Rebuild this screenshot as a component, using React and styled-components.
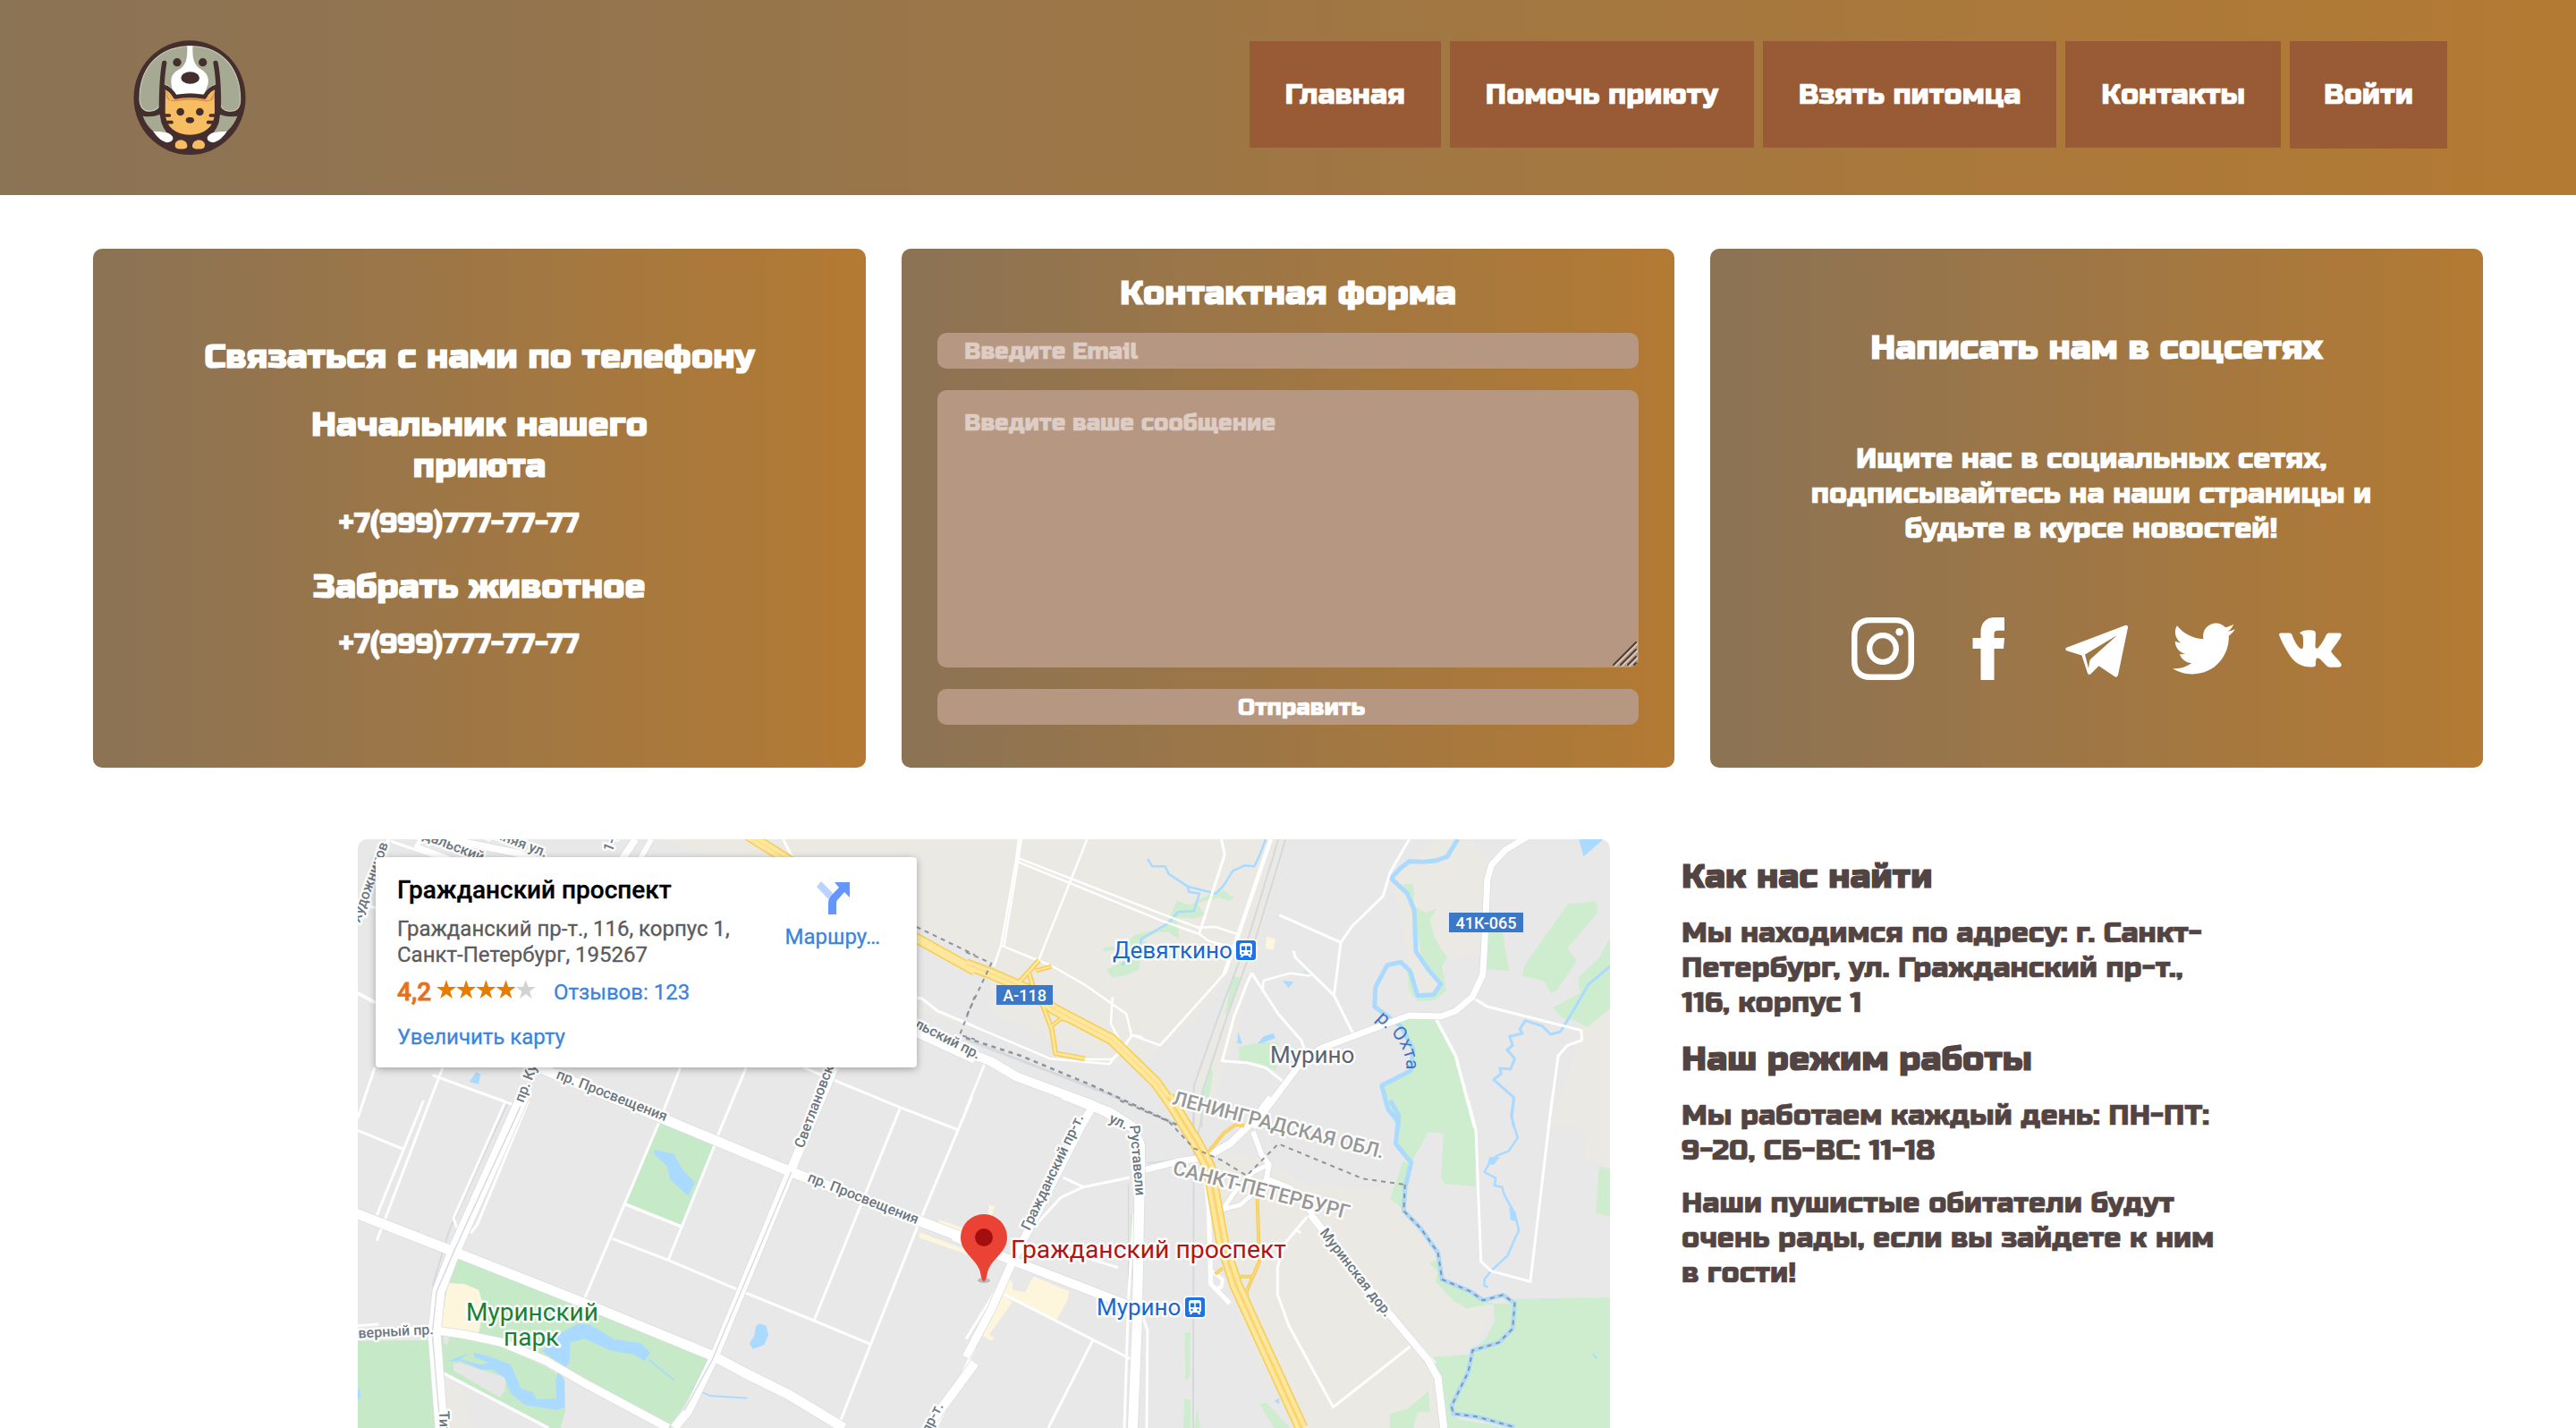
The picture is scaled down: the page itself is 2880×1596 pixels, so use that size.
import React from 'react';
import styled, { createGlobalStyle } from 'styled-components';
import { FaTwitter } from 'react-icons/fa';

const GlobalStyle = createGlobalStyle`
  *, *::before, *::after { box-sizing: border-box; }
  body {
    margin: 0;
    background: #fff;
    font-family: 'Russo One', Inter, 'Open Sans', sans-serif;
    font-weight: 400;
    -webkit-text-stroke: 0.6px currentColor;
    overflow: hidden;
  }
  h3, p { margin: 0; }
`;

const gradient = 'linear-gradient(to right, #8b7355, #b37a33)';

const Page = styled.div`
  display: flex;
  flex-direction: column;
  height: 1596px;
  overflow: hidden;
`;

/* ---------- header ---------- */

const Header = styled.header`
  display: flex;
  justify-content: space-between;
  align-items: flex-start;
  flex: none;
  height: 218px;
  padding: 0 144px 0 146px;
  background: ${gradient};
`;

const Logo = styled.svg`
  width: 133.4px;
  height: 133.4px;
  margin-top: 43px;
`;

const Nav = styled.nav`
  display: flex;
  align-items: flex-start;
  gap: 10px;
  margin-top: 46px;
`;

const NavItem = styled.a`
  display: block;
  padding: 0 ${(p) => p.$pad || 40}px;
  height: ${(p) => p.$height || 119}px;
  line-height: ${(p) => p.$height || 119}px;
  font-size: 32px;
  white-space: nowrap;
  color: #fff;
  background: #985b36;
`;

/* ---------- cards ---------- */

const Cards = styled.section`
  display: flex;
  flex: none;
  gap: 40px;
  margin-top: 60px;
  padding: 0 104px;
`;

const Card = styled.article`
  display: flex;
  flex-direction: column;
  align-items: center;
  width: 864px;
  height: 580px;
  padding: ${(p) => p.$top}px 40px 0;
  border-radius: 10px;
  background: ${gradient};
  color: #fff;
`;

const Heading = styled.h3`
  font-size: 38.4px;
  font-weight: 700;
  line-height: 46px;
  letter-spacing: 0.15px;
  -webkit-text-stroke: 0;
  text-align: ${(p) => p.$align || 'center'};
  white-space: nowrap;
  margin-bottom: ${(p) => p.$after || 0}px;
`;

const Phone = styled.p`
  font-size: 32px;
  line-height: 39px;
  padding-right: 46px;
  margin-bottom: ${(p) => p.$after || 0}px;
`;

const Form = styled.form`
  display: flex;
  flex-direction: column;
  align-self: stretch;
  gap: 24px;
`;

const field = `
  display: block;
  width: 100%;
  border: 0;
  border-radius: 10px;
  outline: 0;
  background: #b69782;
  color: #fff;
  font-family: inherit;
  font-size: 26px;
  &::placeholder { color: #decdc4; opacity: 1; }
`;

const EmailInput = styled.input`
  ${field}
  height: 40px;
  padding: 0 30px;
`;

const MessageBox = styled.div`
  position: relative;
  height: 310px;
`;

const Message = styled.textarea`
  ${field}
  height: 310px;
  padding: 21px 30px 20px;
  line-height: 32px;
  resize: none;
`;

const Grip = styled.svg`
  position: absolute;
  right: 1px;
  bottom: 1px;
  width: 28px;
  height: 28px;
`;

const Submit = styled.button`
  ${field}
  height: 40px;
  padding: 0 0 0 30px;
  text-align: center;
`;

const CardText = styled.p`
  font-size: 32px;
  line-height: 39px;
  text-align: center;
  padding-right: 12px;
  margin-bottom: 80.5px;
`;

const Socials = styled.div`
  display: flex;
  gap: 49.6px;
  svg { display: block; width: 70px; height: 70px; fill: #fff; }
`;

/* ---------- location ---------- */

const Location = styled.section`
  display: flex;
  flex: none;
  gap: 80px;
  margin-top: 80px;
  padding-left: 400px;
`;

const MapFrame = styled.div`
  position: relative;
  width: 1400px;
  height: 658px;
  border-radius: 10px 10px 0 0;
  overflow: hidden;
  background: #e8e8e8;
  -webkit-text-stroke: 0;
`;

const MapSvg = styled.svg`
  display: block;
  font-family: Roboto, sans-serif;
  font-weight: 400;
`;

const PlaceCard = styled.aside`
  position: absolute;
  left: 20px;
  top: 20px;
  display: flex;
  justify-content: space-between;
  width: 605px;
  height: 235px;
  padding: 18px 41px 0 24px;
  border-radius: 4px;
  background: #fff;
  box-shadow: 0 2px 8px rgba(0, 0, 0, 0.3);
  font-family: Roboto, sans-serif;
  font-weight: 400;
  font-size: 24px;
  color: #5b5b5b;
  -webkit-text-stroke: 0.3px currentColor;
`;

const PlaceInfo = styled.div`
  display: flex;
  flex-direction: column;
`;

const PlaceName = styled.div`
  font-size: 28px;
  font-weight: 500;
  line-height: 37px;
  color: #000;
`;

const PlaceAddress = styled.div`
  margin-top: 11px;
  line-height: 29px;
`;

const Rating = styled.div`
  display: flex;
  align-items: center;
  height: 36px;
  margin-top: 8px;
`;

const Score = styled.span`
  width: 44px;
  font-size: 28px;
  font-weight: 500;
  color: #e7711b;
  -webkit-text-stroke: 0.8px currentColor;
`;

const Stars = styled.svg`
  width: 112px;
  height: 24px;
  margin-bottom: 4px;
`;

const MapLink = styled.a`
  color: #3a84df;
  line-height: 30px;
  margin: ${(p) => p.$margin || 0};
`;

const Route = styled.div`
  display: flex;
  flex-direction: column;
  align-items: center;
  padding-top: 8px;
  svg { width: 40px; height: 40px; }
`;

const Details = styled.div`
  display: flex;
  flex-direction: column;
  gap: 20.3px;
  padding-top: 19px;
  color: #524442;
`;

const Paragraph = styled.p`
  font-size: 32px;
  line-height: 39px;
  white-space: nowrap;
`;

/* ---------- drawings ---------- */

const PetLogo = () => (
  <Logo viewBox="140 130 400 400">
    <ellipse cx="338" cy="328.500" rx="187.500" ry="191.500" fill="#452e2e" />
    <path d="M330 156C222 162 169 240 170 335C172 365 185 374 205 374C225 372 236 362 238 350L258 285Q280 292 290 320L390 320Q400 292 422 285L442 350C444 365 455 374 475 374C500 374 508 360 508 335C508 240 455 160 350 156Z" fill="#a7aa92" stroke="#cfd3c0" strokeWidth="3" />
    <path d="M330 155H348C347 200 352 222 383 238C400 252 403 268 399 285Q393 300 387 318Q340 308 291 320Q276 300 276 275C276 255 284 245 299 236C326 222 331 200 330 155Z" fill="#fff" />
    <ellipse cx="340" cy="262" rx="31" ry="20" fill="#452e2e" />
    <circle cx="296" cy="210" r="14" fill="#452e2e" />
    <circle cx="382" cy="210" r="14" fill="#452e2e" />
    <path d="M253 212Q243 270 243 372M425 212Q437 270 435 372" fill="none" stroke="#452e2e" strokeWidth="16" strokeLinecap="round" />
    <path d="M250 291Q274 298 290 326Q338 317 388 326Q402 299 428 291L429 375C429 433 388 460 338 460C290 460 249 433 249 375Z" fill="#f7bd62" stroke="#452e2e" strokeWidth="14" strokeLinejoin="round" />
    <path d="M255 302Q270 320 284 336Q338 324 394 336L424 304L416 335Q400 344 388 341Q338 332 290 341Q272 342 262 332Z" fill="#e2904c" />
    <path d="M255 306L272 336L284 337M423 306L406 336L394 337" fill="#f7bd62" />
    <circle cx="307" cy="376" r="13" fill="#452e2e" />
    <circle cx="372" cy="376" r="13" fill="#452e2e" />
    <ellipse cx="339" cy="404" rx="14" ry="10" fill="#452e2e" />
    <path d="M254 388H270M256 411H278M424 388H408M422 411H400" stroke="#452e2e" strokeWidth="11" strokeLinecap="round" />
    <path d="M181 390Q212 395 238 385L243 412Q250 432 260 443L215 440Q190 418 181 390Z" fill="#a7aa92" />
    <path d="M215 440L256 443Q284 452 282 466Q278 480 258 478Q235 470 215 440Z" fill="#fff" />
    <path d="M498 390Q466 395 440 385L436 412Q429 432 419 443L464 440Q488 418 498 390Z" fill="#a7aa92" />
    <path d="M464 440L423 443Q395 452 397 466Q401 480 421 478Q444 470 464 440Z" fill="#fff" />
    <path d="M289 487C289 465 329 463 330 490Q330 500 318 500H302Q289 500 289 487Z" fill="#f7bd62" />
    <path d="M389 487C389 465 348 463 347 490Q347 500 359 500H376Q389 500 389 487Z" fill="#f7bd62" />
  </Logo>
);

const Instagram = () => (
  <svg viewBox="0 0 70 70">
    <path fillRule="evenodd" d="M20.500 0H49.500C62 0 70 8 70 20.500V49.500C70 62 62 70 49.500 70H20.500C8 70 0 62 0 49.500V20.500C0 8 8 0 20.500 0ZM21 6.300C11.500 6.300 6.500 11.500 6.500 21V49C6.500 58.500 11.500 63.500 21 63.500H49C58.500 63.500 63.500 58.500 63.500 49V21C63.500 11.500 58.500 6.300 49 6.300ZM35 17A18 18 0 1 1 35 53A18 18 0 1 1 35 17ZM35 23.300A11.700 11.700 0 1 0 35 46.700A11.700 11.700 0 1 0 35 23.300Z" />
    <circle cx="53.700" cy="16.300" r="4.300" />
  </svg>
);

const Facebook = () => (
  <svg viewBox="0 0 70 70">
    <path d="M25.500 70V35H16.500V23H25.500V17C25.500 6 31 0 42 0H52V14.700H45.500C41.500 14.700 40.500 16 40.500 19V23H52L51 35H40.500V70Z" />
  </svg>
);

const Telegram = () => (
  <svg viewBox="0 0 70 70">
    <path fillRule="evenodd" d="M1.500 33.800L67.500 8.800Q70.300 8.300 70 11.500L59 64.500Q58 67.800 55 66L37.500 54.300L29 62.800Q26 65.500 24.800 62L18.500 42.500L1.500 37.300Q-1 35.500 1.500 33.800ZM22 41.500L26 57L27 50Q27 48 29 46L58 20Z" />
  </svg>
);

const Vk = () => (
  <svg viewBox="0 0 70 70">
    <path d="M2 17.400H12Q13.700 17.400 14.300 19C17 26 21 34.500 25 35.200C27.200 35.300 27 32 27 25C27 20 26 19.500 23 17.600C25 15 29 14.300 33 14.300C39 14.300 41 15 41 19L40.500 32C40.500 34 41.500 35 43 34.500C46 32 50 26 52.500 20Q53.500 17.400 55.500 17.400H67.500Q70.500 17.400 69.500 20.500C68 25.500 58.500 36.500 58.300 38C58 40 69.700 50 69.800 53Q69.500 55.700 66.500 55.700H57Q54.500 55.700 52.500 53.500C49.500 50.500 45.500 45 43 45.500C41 46 41 49 41 52.500Q41 55.300 37.500 55.500C26 56 17.500 51.500 11 41C6 33 2 25 0.200 20Q-0.500 17.400 2 17.400Z" />
  </svg>
);

const starPath = 'M11 0L13.700 8H22L15.300 13L17.800 21L11 16L4.200 21L6.700 13L0 8H8.300Z';

/* Road network. Each tile carries the transform of its own local grid. */

const tiles = {
  nw: 'translate(390 920) scale(.4464 .33333)',
  sw: 'translate(390 1230) scale(.4464 .33333)',
  ne: 'translate(1080 920) scale(.4719 .33333)',
  se: 'translate(1080 1230) scale(.4719 .33333)',
};

const RURAL = '#ebe9e4';
const GREEN = '#ceedce';
const PARK = '#c6e9c7';
const WATER = '#aadaff';
const SAND = '#fdf6dd';

const areas = {
  ne: [
    [RURAL, '1110,54 1180,54 1250,130 1235,200 1228,440 1200,440 1140,460 1100,580 1070,578 1055,500 1020,250 1010,185 1060,130'],
    [RURAL, '1526,640 1440,690 1458,720 1380,1020 1526,1020'],
    [GREEN, '1035,205 1060,205 1062,280 1090,300 1116,285 1098,325 1110,380 1125,420 1140,450 1128,480 1138,560 1110,595 1070,597 1050,560 1045,500 1060,500 1070,575 1108,573 1124,540 1080,450 1064,330'],
    [GREEN, '1235,290 1265,310 1275,400 1287,495 1232,490'],
    [GREEN, '1425,272 1493,262 1496,300 1425,420 1447,462 1400,560 1385,570 1370,530 1318,512 1322,480'],
    [GREEN, '1526,385 1526,620 1472,685 1440,660 1415,655 1390,618 1455,570 1450,520 1500,450'],
    [GREEN, '1035,655 1113,655 1160,780 1205,1020 1020,1020 1000,960 982,880 1055,830 1065,760 1030,685'],
    [GREEN, '580,235 610,225 635,250 625,262 600,250 575,258 548,268 565,308 540,320 500,315 505,390 480,365 455,365 420,390 440,410 415,440 410,490 380,510 345,518 333,490 365,470 380,425 325,428 325,418 370,410 400,375 470,350 500,260 530,275'],
    [GREEN, '632,512 652,520 625,620 613,640'],
    [GREEN, '580,812 585,840 575,925 560,920 570,850'],
    [GREEN, '645,750 700,735 740,735 735,830 700,808 648,795'],
    [GREEN, '795,505 805,495 815,508'],
    [WATER, '1452,54 1510,54 1463,112'],
    [WATER, '645,702 655,740 642,738'],
    [WATER, '690,740 705,715 728,704 733,720 700,738'],
    [WATER, '750,528 776,532 764,552'],
    [SAND, '712,380 733,388 728,425 710,420'],
  ],
  se: [
    [RURAL, '600,170 720,200 800,280 1000,300 1040,380 1118,530 1130,600 1250,690 1200,830 1110,860 1130,1098 800,1098 690,860 640,700 600,400'],
    [RURAL, '1480,0 1526,0 1526,225 1460,190'],
    [GREEN, '995,0 1190,0 1208,100 1207,288 1135,280 1125,258 1132,110 1095,105 1070,170 1055,208 1020,150 1025,50'],
    [GREEN, '1035,205 1055,210 1040,370 1005,330'],
    [GREEN, '1300,665 1526,660 1526,1098 1300,1098 1150,1050 1155,1020 1192,910 1200,835 1268,812 1295,770'],
    [GREEN, '1098,545 1120,530 1128,600 1225,670 1252,682 1185,697 1155,672 1112,605 1118,575'],
    [GREEN, '1250,680 1300,680 1295,765 1262,812 1200,838 1230,800 1252,740'],
    [GREEN, '1105,860 1190,852 1190,910 1150,1040 1170,1070 1290,1098 1132,1098 1118,925'],
    [GREEN, '1500,222 1526,228 1526,390 1492,376'],
    [GREEN, '1095,975 1100,1045 1070,1045 1060,1098 1005,1098 1005,1050 1045,1035'],
    [GREEN, '695,1018 710,1012 768,1098 730,1098'],
    [GREEN, '518,778 532,778 530,925 520,940'],
    [GREEN, '517,998 532,1005 533,1098 515,1098'],
    [GREEN, '548,1030 555,1098 540,1098'],
    [GREEN, '390,380 402,375 402,610 390,600'],
    [WATER, '1483,845 1495,860 1491,868'],
    [WATER, '730,1008 742,998 742,1018'],
    [WATER, '1240,190 1265,190 1250,215 1236,212'],
    [WATER, '1287,360 1303,375 1303,405 1290,400'],
    [SAND, '95,600 110,605 110,635 140,643 160,590 245,640 240,670 215,735 85,655'],
    [SAND, '85,655 110,675 55,785 68,797 60,805 35,785'],
    [SAND, '55,350 68,355 60,390 52,385'],
  ],
  sw: [
    [PARK, '778,70 917,147 833,423 693,348'],
    [PARK, '275,525 590,690 905,862 850,1000 805,1098 600,955 490,870 380,810 228,775 245,612'],
    [PARK, '228,785 380,825 490,890 540,930 542,1040 530,1098 500,1098 238,915'],
    [PARK, '22,806 215,803 225,900 228,1098 22,1098'],
    ['#ebe9e4', '238,920 280,960 310,1098 232,1098'],
    [SAND, '248,612 290,615 325,635 338,690 325,782 230,760'],
    ['#e6e6e6', '262,882 280,880 395,930 390,975 378,995 262,905'],
    ['#e6e6e6', '237,787 252,792 248,820 238,815'],
    [WATER, '765,165 815,180 835,230 867,275 850,320 805,265 797,220 765,180'],
    [WATER, '485,840 530,780 575,748 605,752 640,780 665,800 730,813 755,845 740,874 715,852 655,838 590,798 555,812 552,880 542,895 500,855'],
    [WATER, '525,905 540,940 541,1030 520,1037 440,1020 405,980 390,930 360,902 330,902 280,872 245,876 298,848 280,868 330,886 352,880 315,860 312,845 345,855 405,885 420,930 430,965 460,978 470,1002 520,1000 518,940'],
    [WATER, '1030,748 1045,755 1051,785 1040,820 1012,833 1003,815 1015,790 1020,755'],
    [WATER, '22,965 28,970 29,1000 22,1000'],
    [SAND, '1478,400 1568,440 1568,465 1475,412'],
    [SAND, '1430,442 1568,512 1568,525 1428,460'],
  ],
  nw: [[WATER, '318,835 330,840 325,875 302,868']],
};

/* width, then the points of each line */
const water = {
  ne: [
    [5, '1165,54 1140,112 1115,125 1085,130 1050,128 1030,150 1007,185 1045,235 1062,290 1066,430 1095,490 1125,540 1108,575 1070,578 1052,495 1030,466 998,476 970,550 968,615 1030,680 1060,760 1053,830 985,880 1000,960 1025,1000 1022,1030'],
    [2.5, '430,120 442,145 472,145 480,170 525,212 592,236 610,210 632,160 660,142 683,145 695,110 710,54'],
    [2.5, '525,212 528,230 553,236 540,295 502,298 480,335 415,388 412,420 370,475'],
    [3, '1526,480 1475,540 1430,650 1408,700 1385,708 1365,680 1325,662 1312,690 1318,705 1288,715 1295,745 1282,760 1300,790 1290,825 1265,822 1268,840 1250,860 1298,920 1292,980 1298,1020'],
  ],
  se: [
    [5, '1005,0 1025,50 1018,145 1055,208 1040,290 1037,370 1078,430 1118,510 1128,600 1195,640 1225,670 1272,652 1300,680 1295,765 1262,812 1200,838 1190,910 1150,1025 1155,1050 1210,1060 1300,1095'],
    [2.5, '1298,0 1293,60 1307,125 1285,170 1258,185 1240,210 1228,240 1255,260 1252,285 1270,290 1275,315 1300,380 1310,435 1300,465 1283,520 1245,570 1228,600 1228,620 1237,626'],
  ],
  sw: [
    [1.8, '750,868 815,938'],
    [1.8, '857,962 905,990 998,998'],
  ],
};

const rails = {
  ne: [
    [2, '740,54 670,380 600,640 540,880 538,1020'],
    [2, '757,54 690,370 620,640 560,900 558,1020'],
    [3, '0,725 120,790 350,915 500,1012'],
  ],
  se: [
    [2, '540,0 538,1098'],
    [1.5, '565,0 540,190 430,210'],
    [1.5, '385,280 385,600'],
  ],
  sw: [
    [2, '400,0 250,440 210,620 212,680'],
  ],
};

const minor = {
  nw: [
    [3, '100,58 230,118'], [3, '1088,54 1112,118'], [5, '180,54 170,78 250,118'],
    [4, '22,570 67,602'], [3, '65,820 22,990'], [3, '235,820 70,1400'],
    [3, '210,845 420,948'], [3, '830,820 778,1000'], [3, '995,820 920,1060'],
    [3, '1140,820 1390,958 1525,1028'], [3, '1422,585 1435,588 1475,630 1568,682'],
    [3, '22,262 67,285'],
  ],
  sw: [
    [3, '450,0 322,415 305,445'], [3, '390,10 262,395 272,430'],
    [3, '22,100 135,162'], [3, '187,0 70,385'],
    [3, '778,70 590,665'], [3, '917,147 800,535'], [3, '660,463 800,535 970,632 1165,738 1307,817'],
    [3.500, '693,348 833,423'], [3, '1380,28 1165,738'],
    [3, '1560,-10 1425,420 1307,817 1230,1078'], [3, '1568,830 1470,1098'],
    [3.500, '238,915 500,1098'], [3, '22,755 75,750'],
  ],
  ne: [
    [2.500, '125,54 118,130 83,410'], [2.500, '131,54 123,130 90,412'],
    [2.500, '120,115 465,305 550,350 592,348 645,373'],
    [2.500, '120,128 460,325 553,372 575,395 640,420'],
    [2.500, '287,54 172,460'], [3, '605,54 613,105 553,368'],
    [2.500, '66,480 83,410 205,480 285,545 380,640 392,710 460,745 612,505 645,373'],
    [2.500, '347,583 343,672 368,740'], [2.500, '418,718 392,710 370,765 345,792 280,792'],
    [2.500, '0,670 200,790 340,808 392,715'],
    [4.500, '722,54 645,375 612,505'],
    [3, '677,503 665,540 635,650 607,797 665,803 710,820 750,865'],
    [3, '677,503 740,640 795,730 803,765'],
    [3, '742,308 888,400'], [3, '1050,54 1005,165 988,245 915,345 888,400 872,578 918,708'],
    [3, '776,428 780,450 872,578'], [2.500, '703,560 705,528 768,503 818,512'],
    [3, '1200,585 1235,615 1458,695 1459,728 1425,745 1403,780 1380,1020'],
    [3.500, '1113,655 1160,780 1205,1020'], [2.500, '45,805 0,960'],
  ],
  se: [
    [3, '1190,0 1208,100 1220,540 1245,572 1337,607 1388,0'],
    [2.500, '1025,740 1112,880'],
    [3, '808,390 755,480 738,560 738,650 765,755 870,1028 1052,825'], [2.500, '780,430 793,445'],
    [5, '565,215 575,360 580,615 625,680'], [4, '580,570 608,600 605,625 590,632'],
    [3, '412,700 430,770 428,1098'], [3, '398,380 385,660 375,1098'],
    [3, '230,258 278,290 388,258'], [3, '278,290 225,325 150,440'],
    [3, '90,650 395,870'], [3, '300,805 195,1098'], [3, '200,490 360,560'],
    [3, '110,560 70,640 0,800'],
  ],
};

const major = {
  nw: [
    [8, '718,54 680,130'], [6, '758,54 725,130'], [5, '100,54 22,310'],
    [8, '250,54 420,100 560,170'],
    [10, '1422,702 1568,792'],
  ],
  sw: [
    [11, '10,374 260,505 600,685 915,858 990,912 1100,985 1240,1098'],
    [14, '445,-40 265,500 225,640 214,780 232,1098'],
    [11, '440,-130 800,68 1100,235 1568,475'],
    [10, '1215,-110 1110,225 915,860 850,1040 815,1098'],
    [10, '1568,880 1480,1040 1448,1098'],
    [9, '10,782 215,770 290,785 380,810 490,870 600,955 800,1098'],
  ],
  ne: [
    [7, '1330,45 1278,90 1245,140 1235,190 1228,420 1224,510 1200,582 1160,630 1125,648 1050,645 840,755 790,810 700,980 680,1020'],
    [10, '-20,755 60,800 120,850 300,945 370,1000'],
  ],
  se: [
    [8, '722,-10 680,70 625,145 575,185'],
    [6, '680,105 700,180 718,215 712,262 770,295 820,380'],
    [5, '712,218 680,240 640,300 608,365 650,350 690,300 712,262'],
    [8, '815,380 1000,710 1095,870 1118,930 1132,1098'],
    [11, '230,-20 340,40 395,90 412,150 412,240 405,760 395,1098'],
    [7, '425,232 500,205 560,192'],
    [9, '300,20 275,80 110,540 60,700 0,860'],
    [10, '-30,455 80,520 410,700'],
  ],
};

const highway = {
  nw: [[13, '1000,40 1120,140'], [12, '1400,370 1568,495']],
  ne: [
    [6, '55,495 125,535 160,480 173,460'], [6, '150,505 158,545 182,610 203,690 212,772 282,790'],
    [5, '165,495 203,480'], [5, '203,680 225,655 260,668'],
    [13, '0,473 60,505 150,560 210,625 345,725 450,870 525,1020'],
  ],
  se: [
    [4, '575,172 610,110 640,80 660,85'], [4, '690,330 695,540 665,640 668,700'],
    [4, '615,540 640,590 680,590 693,545'], [4, '590,582 608,562'],
    [15, '478,-12 545,140 575,220 608,480 640,620 695,790 795,1098'],
  ],
};

const boundary = {
  nw: [[2, '1422,348 1568,442'], [2, '1568,580 1530,710 1568,725']],
  ne: [[2, '0,432 60,470 20,590 0,650'], [2.500, '0,720 130,780 300,880 505,1015']],
  se: [
    [2, '365,0 480,70 540,160 605,200 665,252 740,145 940,262 1040,282'],
    [2, '1040,282 1037,370 1078,430 1118,510 1128,600 1195,640 1225,670 1272,652 1300,680 1295,765 1262,812 1200,838 1190,910 1150,1025 1155,1050 1210,1060 1300,1095'],
  ],
};

const Lines = ({ set, stroke, extra = 0, dash }) =>
  Object.entries(set).map(([tile, lines]) => (
    <g key={tile} transform={tiles[tile]} fill="none" stroke={stroke} strokeLinejoin="round">
      {lines.map(([width, points], i) => (
        <polyline key={i} points={points} strokeWidth={width + extra} strokeDasharray={dash} vectorEffect="non-scaling-stroke" />
      ))}
    </g>
  ));

const Label = ({ x, y, turn = 0, size = 16, color = '#6b7680', weight = 500, anchor, children }) => (
  <text
    transform={`translate(${x} ${y}) rotate(${turn})`}
    fontSize={size}
    fontWeight={weight}
    fill={color}
    textAnchor={anchor}
    stroke="#fff"
    strokeWidth="5"
    strokeLinejoin="round"
    strokeOpacity="0.9"
    paintOrder="stroke"
  >
    {children}
  </text>
);

const Shield = ({ x, y, width, children }) => (
  <g>
    <rect x={x} y={y} width={width} height="22" fill="#3c78c8" />
    <text x={x + width / 2} y={y + 17.500} fontSize="18" fontWeight="500" fill="#fff" textAnchor="middle">{children}</text>
  </g>
);

const Station = ({ x, y }) => (
  <g transform={`translate(${x} ${y})`}>
    <rect x="-1.500" y="-1.500" width="25" height="25" rx="4" fill="#fff" />
    <rect width="22" height="22" rx="3" fill="#1a73e8" />
    <path d="M7 3H15Q18 3 18 6V14Q18 16.500 16 17L17.500 19H15L13.500 17H8.500L7 19H4.500L6 17Q4 16.500 4 14V6Q4 3 7 3Z" fill="#fff" />
    <path d="M6 6.500H10.200V11H6ZM11.800 6.500H16V11H11.800Z" fill="#1a73e8" />
    <circle cx="7.500" cy="14" r="1.200" fill="#1a73e8" />
    <circle cx="14.500" cy="14" r="1.200" fill="#1a73e8" />
  </g>
);

const CityMap = () => (
  <MapSvg viewBox="400 938 1400 658" width="1400" height="658">
    <polygon fill={RURAL} points="740,938 1430,938 1405,1030 1385,1075 1372,1092 1335,1140 1285,1180 1245,1190 1230,1184 1105,1130 1112,1078 1090,1065 1025,1035 1025,1120 1085,1150 1000,1120 900,1000" />
    <polygon fill={RURAL} points="1429,938 1438,938 1378,1170 1345,1260 1334,1260 1335,1213 1395,1047" />
    {Object.entries(areas).map(([tile, list]) => (
      <g key={tile} transform={tiles[tile]}>
        {list.map(([fill, points], i) => <polygon key={i} fill={fill} points={points} />)}
      </g>
    ))}
    <Lines set={water} stroke={WATER} />
    <Lines set={rails} stroke="#d5d9dd" />
    <Lines set={minor} stroke="#fff" />
    <Lines set={major} stroke="#dadce0" extra={1.5} />
    <Lines set={major} stroke="#fff" />
    <g transform={tiles.sw} fill="none" stroke="#d8dbdf">
      <path d="M430 20L265 500L220 640L209 780L229 1098M1108 240L910 870L840 1040" strokeWidth="1.500" vectorEffect="non-scaling-stroke" />
    </g>
    <Lines set={highway} stroke="#f7cf5f" />
    <Lines set={highway} stroke="#ffe89e" extra={-3.5} />
    <Lines set={{ ne: [highway.ne[4]], se: [highway.se[4]], nw: highway.nw }} stroke="#f9d670" extra={-12} />
    <Lines set={boundary} stroke="#8e9398" dash="5 5" />

    <Label x="402" y="1032" turn="-70">Художников</Label>
    <Label x="447" y="928" turn="21">Суздальский</Label>
    <Label x="528" y="927" turn="21">Верхняя ул.</Label>
    <Label x="684" y="953" turn="-68">1-й Верхний</Label>
    <Label x="1093" y="1184" turn="27" anchor="end">Суздальский пр.</Label>
    <Label x="585" y="1233" turn="-69">пр. Культуры</Label>
    <Label x="621" y="1205" turn="21.500">пр. Просвещения</Label>
    <Label x="902" y="1320" turn="21.500">пр. Просвещения</Label>
    <Label x="898" y="1284" turn="-69.500">Светлановский пр.</Label>
    <Label x="485" y="1491" turn="-3" anchor="end">Северный пр.</Label>
    <Label x="491" y="1577" turn="88">Тихорецкий пр.</Label>
    <Label x="1055" y="1571" turn="-63" anchor="end">Гражданский пр-т.</Label>
    <Label x="1151" y="1376" turn="-64.500">Гражданский пр-т.</Label>
    <Label x="1239" y="1254" turn="24">ул.</Label>
    <Label x="1263" y="1258" turn="85">Руставели</Label>
    <Label x="1475" y="1378" turn="52">Муринская дор.</Label>
    <Label x="1310" y="1234" turn="14.500" size="22" color="#979797">ЛЕНИНГРАДСКАЯ ОБЛ.</Label>
    <Label x="1310" y="1312" turn="14.500" size="22.500" color="#979797">САНКТ-ПЕТЕРБУРГ</Label>
    <Label x="1244" y="1071" size="26" color="#1967d2" weight="400">Девяткино</Label>
    <Station x="1382" y="1051" />
    <Label x="1420" y="1188" size="26" color="#5b6370" weight="400">Мурино</Label>
    <Label x="1226" y="1470" size="26" color="#1967d2" weight="400">Мурино</Label>
    <Station x="1325" y="1450" />
    <Label x="521" y="1476" size="28" color="#188038" weight="400">Муринский</Label>
    <Label x="563" y="1504" size="28" color="#188038" weight="400">парк</Label>
    <path id="okhta" d="M1538 1139L1553 1153Q1568 1165 1572 1187V1230" fill="none" />
    <text fontSize="21" fill="#3f74bd"><textPath href="#okhta">р. Охта</textPath></text>
    <Shield x={1114} y={1101} width={63}>А-118</Shield>
    <Shield x={1620} y={1020} width={83}>41К-065</Shield>

    <ellipse cx="1100" cy="1431" rx="7" ry="3" fill="#000" opacity="0.2" />
    <path d="M1100 1432C1097 1432 1097 1424 1095 1419C1089 1405 1074 1399 1074 1383A26 26 0 0 1 1126 1383C1126 1399 1111 1405 1105 1419C1103 1424 1103 1432 1100 1432Z" fill="#ea4335" />
    <circle cx="1100" cy="1383" r="10" fill="#a50e0e" />
    <Label x="1130" y="1406" size="28.300" color="#b31412" weight="400">Гражданский проспект</Label>
  </MapSvg>
);

export default function App() {
  return (
    <Page>
      <GlobalStyle />
      <Header>
        <PetLogo />
        <Nav>
          <NavItem>Главная</NavItem>
          <NavItem>Помочь приюту</NavItem>
          <NavItem>Взять питомца</NavItem>
          <NavItem>Контакты</NavItem>
          <NavItem $pad={38} $height={120}>Войти</NavItem>
        </Nav>
      </Header>

      <Cards>
        <Card $top={98}>
          <Heading $after={30}>Связаться с нами по телефону</Heading>
          <Heading $after={21}>Начальник нашего<br />приюта</Heading>
          <Phone $after={29}>+7(999)777-77-77</Phone>
          <Heading $after={21}>Забрать животное</Heading>
          <Phone>+7(999)777-77-77</Phone>
        </Card>

        <Card $top={27}>
          <Heading $after={21}>Контактная форма</Heading>
          <Form>
            <EmailInput placeholder="Введите Email" />
            <MessageBox>
              <Message placeholder="Введите ваше сообщение" />
              <Grip viewBox="0 0 28 28" fill="none" strokeWidth="2" strokeLinecap="round">
                <path d="M3 27L28 2M11 27L28 10M19 27L28 18" stroke="#d9c8bb" />
                <path d="M1 26L26 1M9 26L26 9M17 26L26 17M24 26L26 24" stroke="#4d4039" />
              </Grip>
            </MessageBox>
            <Submit type="button">Отправить</Submit>
          </Form>
        </Card>

        <Card $top={88}>
          <Heading $after={80.5}>Написать нам в соцсетях</Heading>
          <CardText>
            Ищите нас в социальных сетях,<br />
            подписывайтесь на наши страницы и<br />
            будьте в курсе новостей!
          </CardText>
          <Socials>
            <Instagram />
            <Facebook />
            <Telegram />
            <FaTwitter />
            <Vk />
          </Socials>
        </Card>
      </Cards>

      <Location>
        <MapFrame>
          <CityMap />
          <PlaceCard>
            <PlaceInfo>
              <PlaceName>Гражданский проспект</PlaceName>
              <PlaceAddress>Гражданский пр-т., 116, корпус 1,<br />Санкт-Петербург, 195267</PlaceAddress>
              <Rating>
                <Score>4,2</Score>
                <Stars viewBox="0 0 112 24">
                  {[0, 1, 2, 3, 4].map((i) => (
                    <path key={i} d={starPath} transform={`translate(${i * 22.2} 1)`} fill={i < 4 ? '#e77d00' : '#d2d2d2'} />
                  ))}
                </Stars>
                <MapLink $margin="2px 0 0 19px">Отзывов: 123</MapLink>
              </Rating>
              <MapLink $margin="18px 0 0">Увеличить карту</MapLink>
            </PlaceInfo>
            <Route>
              <svg viewBox="0 0 40 40">
                <path d="M2 7L7 1L20 14L15 21Z" fill="#bcd2ff" />
                <path d="M15 38V26Q15 20 19 16L27 8L22 2H39V19L33 13L27 20Q24 22 24 26V38Z" fill="#6496ff" />
              </svg>
              <MapLink $margin="8px 0 0">Маршру…</MapLink>
            </Route>
          </PlaceCard>
        </MapFrame>

        <Details>
          <Heading $align="left">Как нас найти</Heading>
          <Paragraph>
            Мы находимся по адресу: г. Санкт-<br />
            Петербург, ул. Гражданский пр-т.,<br />
            116, корпус 1
          </Paragraph>
          <Heading $align="left">Наш режим работы</Heading>
          <Paragraph>
            Мы работаем каждый день: ПН-ПТ:<br />
            9-20, СБ-ВС: 11-18
          </Paragraph>
          <Paragraph>
            Наши пушистые обитатели будут<br />
            очень рады, если вы зайдете к ним<br />
            в гости!
          </Paragraph>
        </Details>
      </Location>
    </Page>
  );
}
